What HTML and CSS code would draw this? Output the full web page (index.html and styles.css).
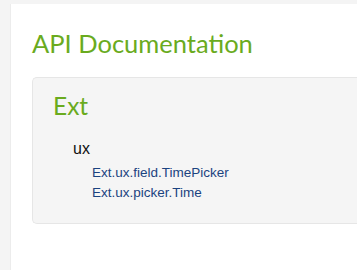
FILE: index.html
```html
<!DOCTYPE html>
<html lang="en">
<head>
  <meta charset="UTF-8">
  <title>API Documentation</title>
  <link rel="stylesheet" href="styles.css">
</head>
<body>
  <div class="page">
    <h1 class="title">API Documentation</h1>

    <div class="box">
      <h2 class="ns">Ext</h2>
      <div class="pkg">
        <div class="pkg-name">ux</div>
        <ul class="classes">
          <li><a href="#">Ext.ux.field.TimePicker</a></li>
          <li><a href="#">Ext.ux.picker.Time</a></li>
        </ul>
      </div>
    </div>
  </div>
</body>
</html>
```

FILE: styles.css
```css
* { box-sizing: border-box; margin: 0; padding: 0; }

html, body { height: 100%; }

body {
  background: #f4f4f4;
  padding: 4px 0 0 10px;
  font-family: 'Liberation Sans', Arial, sans-serif;
  overflow: hidden;
}

.page {
  background: #fff;
  height: 100%;
  border-left: 1px solid #ececec;
  padding: 23px 0 0 21px;
}

.title {
  font-family: Lato, sans-serif;
  font-weight: 400;
  font-size: 25.5px;
  line-height: 32px;
  color: #6aab1e;
}

.box {
  margin-top: 18px;
  background: #f5f5f5;
  border: 1px solid #e6e6e6;
  border-right: none;
  border-radius: 5px 0 0 5px;
  padding: 14px 0 0 20px;
  height: 147px;
}

.ns {
  font-family: Lato, sans-serif;
  font-weight: 400;
  font-size: 24.5px;
  line-height: 28px;
  color: #6aab1e;
}

.pkg {
  padding: 19px 0 0 20px;
}

.pkg-name {
  font-size: 16px;
  line-height: 20px;
  color: #111;
}

.classes {
  list-style: none;
  padding: 4px 0 0 19px;
}

.classes li {
  font-size: 13.5px;
  line-height: 20px;
}

.classes a {
  color: #1b4380;
  text-decoration: none;
}
```
